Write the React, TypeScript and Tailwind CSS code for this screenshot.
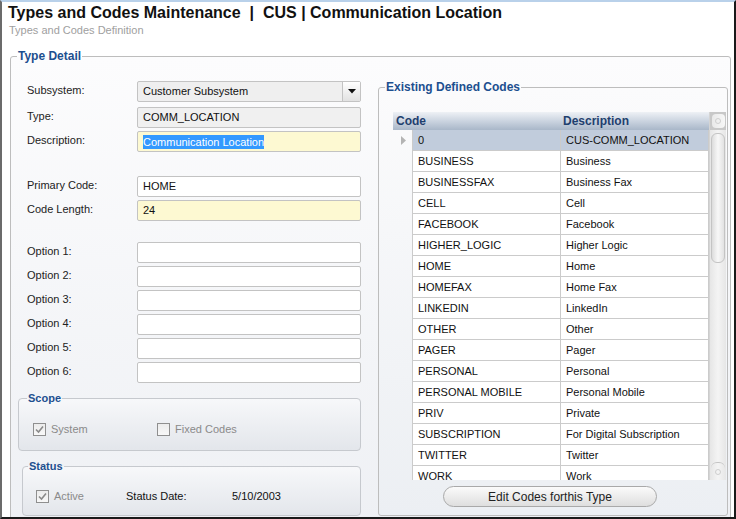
import React from "react";

const CODES: [string, string][] = [
  ["0", "CUS-COMM_LOCATION"],
  ["BUSINESS", "Business"],
  ["BUSINESSFAX", "Business Fax"],
  ["CELL", "Cell"],
  ["FACEBOOK", "Facebook"],
  ["HIGHER_LOGIC", "Higher Logic"],
  ["HOME", "Home"],
  ["HOMEFAX", "Home Fax"],
  ["LINKEDIN", "LinkedIn"],
  ["OTHER", "Other"],
  ["PAGER", "Pager"],
  ["PERSONAL", "Personal"],
  ["PERSONAL MOBILE", "Personal Mobile"],
  ["PRIV", "Private"],
  ["SUBSCRIPTION", "For Digital Subscription"],
  ["TWITTER", "Twitter"],
  ["WORK", "Work"],
];

function Label({ children }: { children: React.ReactNode }) {
  return <div className="w-[110px] shrink-0 pb-[3px] text-[11px] text-[#222]">{children}</div>;
}

function Box({ tone = "white", children, className = "" }: { tone?: "white" | "gray" | "yellow"; children?: React.ReactNode; className?: string }) {
  const bg = tone === "gray" ? "bg-[#f0f0f0]" : tone === "yellow" ? "bg-[#fdf9d2]" : "bg-white";
  return (
    <div className={`w-[224px] h-[21px] rounded-[2px] border border-[#c3c3c3] ${bg} flex items-center pl-[5px] text-[11px] text-[#111] ${className}`}>
      {children}
    </div>
  );
}

function Check({ checked }: { checked?: boolean }) {
  return (
    <span className="w-[13px] h-[13px] border border-[#8f8f8f] bg-linear-to-b from-[#ececec] to-[#f8f8f8] flex items-center justify-center">
      {checked && (
        <svg width="9" height="9" viewBox="0 0 9 9">
          <path d="M1 4.5 L3.5 7 L8 1.5" fill="none" stroke="#8a8a8a" strokeWidth="1.6" />
        </svg>
      )}
    </span>
  );
}

export default function App() {
  return (
    <div className="w-[736px] h-[519px] overflow-hidden bg-white border-t-2 border-t-[#b9d1ea] border-l-2 border-l-[#6b6b6b] border-r-2 border-r-[#1a1a1a] border-b-2 border-b-[#1a1a1a] font-['Liberation_Sans',Arial,sans-serif]">
      <div className="pl-[6px]">
        <div className="text-[16px] leading-[22px] font-bold text-[#111] whitespace-pre">
          {"Types and Codes Maintenance  |  CUS | Communication Location"}
        </div>
        <div className="text-[11px] leading-[13px] text-[#a0a0a0] pl-[1px]">Types and Codes Definition</div>
      </div>

      <fieldset className="mt-[12px] ml-[8px] w-[721px] border border-[#bdbdbd] rounded-[3px] bg-linear-to-b from-[#fcfcfd] to-[#eef0f4] pb-[20px]">
        <legend className="ml-[6px] px-[1px] text-[12px] leading-[14px] font-bold text-[#1d4f8f]">Type Detail</legend>
        <div className="flex">
          {/* left column */}
          <div className="w-[367px] shrink-0 pl-[7px] pt-[18px]">
            <div className="pl-[9px]">
              <div className="flex items-center">
                <Label>Subsystem:</Label>
                <div className="w-[224px] h-[21px] rounded-[2px] border border-[#c3c3c3] bg-[#efefef] flex items-center text-[11px] text-[#111]">
                  <span className="flex-1 pl-[5px]">Customer Subsystem</span>
                  <span className="w-[18px] h-[19px] border-l border-[#c3c3c3] bg-linear-to-b from-white to-[#e2e2e2] flex items-center justify-center">
                    <svg width="8" height="5" viewBox="0 0 8 5">
                      <path d="M0 0 H8 L4 4.5 Z" fill="#111" />
                    </svg>
                  </span>
                </div>
              </div>
              <div className="flex items-center mt-[5px]">
                <Label>Type:</Label>
                <Box tone="gray">COMM_LOCATION</Box>
              </div>
              <div className="flex items-center mt-[3px]">
                <Label>Description:</Label>
                <Box tone="yellow">
                  <span className="bg-[#3399ff] text-white leading-[14px]">Communication Location</span>
                </Box>
              </div>
              <div className="flex items-center mt-[24px]">
                <Label>Primary Code:</Label>
                <Box>HOME</Box>
              </div>
              <div className="flex items-center mt-[3px]">
                <Label>Code Length:</Label>
                <Box tone="yellow">24</Box>
              </div>
              {[1, 2, 3, 4, 5, 6].map((n) => (
                <div key={n} className={`flex items-center ${n === 1 ? "mt-[21px]" : "mt-[3px]"}`}>
                  <Label>Option {n}:</Label>
                  <Box />
                </div>
              ))}
            </div>

            <fieldset className="mt-[8px] w-[343px] border border-[#c6c9ce] rounded-[4px] bg-linear-to-b from-[#f7f8fa] to-[#e3e6eb] pt-[17px] pb-[14px]">
              <legend className="ml-[8px] px-[1px] text-[11px] leading-[14px] font-bold text-[#1d4f8f]">Scope</legend>
              <div className="flex items-center h-[14px] text-[11px] text-[#8a8a8a]">
                <div className="ml-[14px] flex items-center gap-[5px] w-[124px]">
                  <Check checked />
                  <span>System</span>
                </div>
                <div className="flex items-center gap-[5px]">
                  <Check />
                  <span>Fixed Codes</span>
                </div>
              </div>
            </fieldset>

            <fieldset className="mt-[8px] ml-[4px] w-[339px] border border-[#c6c9ce] rounded-[4px] bg-linear-to-b from-[#f7f8fa] to-[#e3e6eb] pt-[16px] pb-[12px]">
              <legend className="ml-[5px] px-[1px] text-[11px] leading-[14px] font-bold text-[#1d4f8f]">Status</legend>
              <div className="flex items-center h-[14px] text-[11px]">
                <div className="ml-[13px] flex items-center gap-[5px] w-[90px] text-[#8a8a8a]">
                  <Check checked />
                  <span>Active</span>
                </div>
                <span className="w-[106px] text-[#111]">Status Date:</span>
                <span className="text-[#111]">5/10/2003</span>
              </div>
            </fieldset>
          </div>

          {/* right column */}
          <fieldset className="mt-[17px] w-[350px] border border-[#bdbdbd] rounded-[3px] bg-linear-to-b from-[#fbfbfc] to-[#eceff3] pt-[18px] pb-[8px]">
            <legend className="ml-[6px] px-[1px] text-[12px] leading-[14px] font-bold text-[#1d4f8f]">Existing Defined Codes</legend>
            <div className="ml-[14px] flex h-[368px] overflow-hidden">
              <div className="w-[316px] shrink-0">
                <div className="h-[18px] flex items-center bg-linear-to-b from-[#eef1f5] via-[#cbd4e0] to-[#a9b7c9] text-[12px] font-bold text-[#1f3f6e]">
                  <span className="w-[170px] pl-[3px]">Code</span>
                  <span>Description</span>
                </div>
                {CODES.map(([code, desc], i) => (
                  <div key={code} className="flex h-[21px] text-[11px] text-[#111]">
                    <div className="w-[19px] shrink-0 flex items-center pl-[8px]">
                      {i === 0 && (
                        <svg width="5" height="9" viewBox="0 0 5 9">
                          <path d="M0 0 L5 4.5 L0 9 Z" fill="#b4b4b4" />
                        </svg>
                      )}
                    </div>
                    <div className={`w-[148px] shrink-0 border-l border-b border-[#cbcbcb] pl-[5px] flex items-center ${i === 0 ? "bg-[#c1ccdc]" : "bg-white"}`}>
                      {code}
                    </div>
                    <div className={`w-[149px] shrink-0 border-l border-r border-b border-[#cbcbcb] pl-[5px] flex items-center ${i === 0 ? "bg-[#c1ccdc]" : "bg-white"}`}>
                      {desc}
                    </div>
                  </div>
                ))}
              </div>
              <div className="w-[17px] shrink-0 flex flex-col bg-linear-to-r from-[#e6e6e6] via-[#f4f4f4] to-[#e6e6e6] border-l border-[#d4d4d4]">
                <div className="h-[18px] bg-[#c8c8c8] flex items-center justify-center">
                  <span className="w-[13px] h-[14px] rounded-[4px] bg-linear-to-r from-[#e9e9e9] to-[#f7f7f7] flex items-center justify-center">
                    <span className="w-[6px] h-[6px] rounded-full border border-[#cfcfcf]" />
                  </span>
                </div>
                <div className="mt-[3px] mx-[1px] h-[130px] rounded-[6px] border border-[#c4c4c4] bg-linear-to-r from-[#dcdcdc] via-[#f8f8f8] to-[#e2e2e2]" />
                <div className="flex-1" />
                <div className="h-[18px] mx-[1px] rounded-t-[6px] border-t border-[#c4c4c4] flex items-center justify-center">
                  <span className="w-[6px] h-[6px] rounded-full border border-[#cfcfcf]" />
                </div>
              </div>
            </div>
            <button className="mt-[6px] ml-[64px] w-[214px] h-[21px] rounded-full border border-[#a9a9a9] bg-linear-to-b from-[#fbfbfb] to-[#dedede] text-[12px] text-[#222] flex items-center justify-center">
              Edit Codes forthis Type
            </button>
          </fieldset>
        </div>
      </fieldset>
    </div>
  );
}
